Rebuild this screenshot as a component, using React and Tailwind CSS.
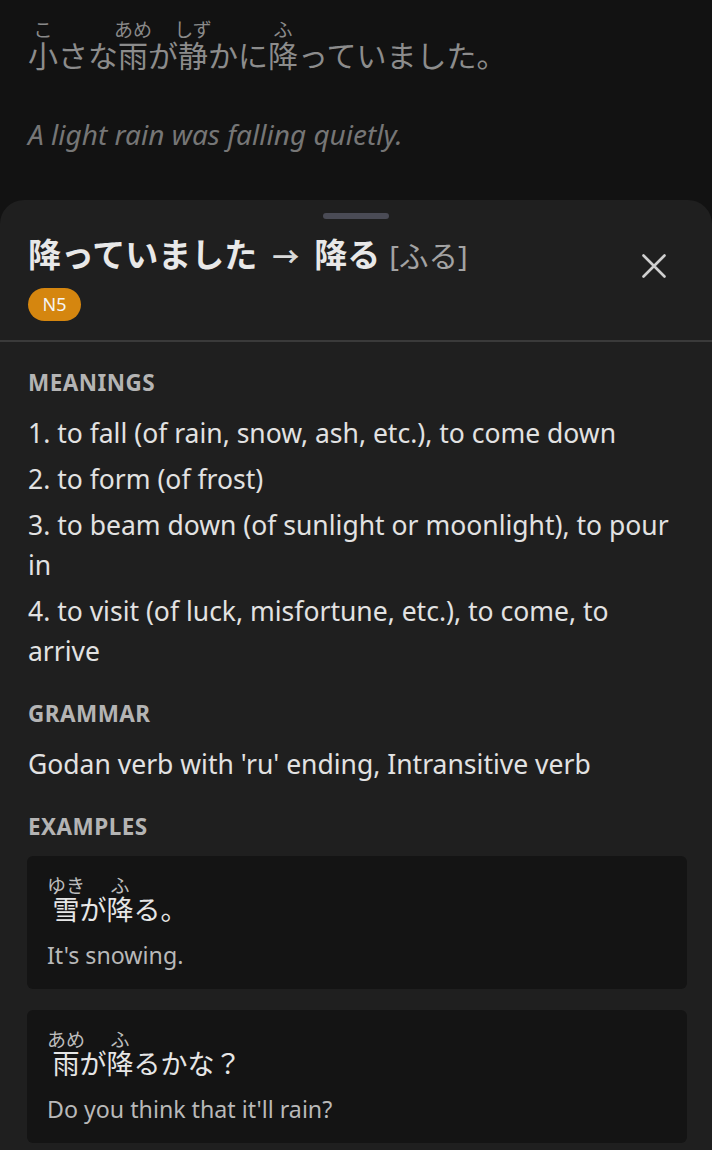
import React from "react";

const FONT = { fontFamily: '"Noto Sans", "Noto Sans CJK JP", sans-serif' };

function R({ b, r, rtClass }) {
  return (
    <ruby>
      {b}
      <rt className={rtClass}>{r}</rt>
    </ruby>
  );
}

function CloseIcon() {
  return (
    <svg width="24" height="24" viewBox="0 0 24 24" fill="none" stroke="#cfcfcf" strokeWidth="2.6" strokeLinecap="round">
      <path d="M1.5 1.5 L22.5 22.5 M22.5 1.5 L1.5 22.5" />
    </svg>
  );
}

const meanings = [
  "1. to fall (of rain, snow, ash, etc.), to come down",
  "2. to form (of frost)",
  "3. to beam down (of sunlight or moonlight), to pour in",
  "4. to visit (of luck, misfortune, etc.), to come, to arrive",
];

function Heading({ children }) {
  return (
    <div className="text-[22.5px] leading-[28px] font-bold tracking-[0.02em] text-[#b4b4b4]">
      {children}
    </div>
  );
}

function ExampleCard({ children, en }) {
  const rt = "text-[19px] text-[#bdbdbd]";
  return (
    <div className="rounded-[6px] bg-[#141414] pl-[20px] pr-[20px] pt-[20px] pb-[18px]">
      <div className="text-[27px] leading-[40px] text-[#e6e6e6]">{children(rt)}</div>
      <div className="mt-[9px] text-[23.2px] leading-[32px] text-[#b9b9b9]">{en}</div>
    </div>
  );
}

export default function App() {
  const topRt = "text-[19px] text-[#8a8a8a]";
  return (
    <div className="flex min-h-[1150px] w-[712px] flex-col bg-[#121212] overflow-hidden" style={FONT}>
      <div className="h-[200px] shrink-0 px-[28px] pt-[20px]">
        <div className="text-[30px] leading-[44px] text-[#8c8c8c]">
          <R b="小" r="こ" rtClass={topRt} />さな<R b="雨" r="あめ" rtClass={topRt} />が
          <R b="静" r="しず" rtClass={topRt} />かに<R b="降" r="ふ" rtClass={topRt} />っていました。
        </div>
        <div className="mt-[38px] text-[28px] leading-[36px] italic text-[#767676]">
          A light rain was falling quietly.
        </div>
      </div>

      <div className="flex-1 rounded-t-[24px] bg-[#1f1f1f] pb-[40px]">
        <div className="pt-[13px]">
          <div className="mx-auto h-[6px] w-[66px] rounded-full bg-[#4a4b55]" />
        </div>
        <div className="flex items-start justify-between pl-[28px] pr-[46px] pt-[14px]">
          <div>
            <div className="flex items-baseline leading-[44px]">
              <span className="text-[33px] font-bold text-[#e8e8e8]">降っていました</span>
              <span className="mx-[15px] text-[27px] font-bold text-[#d8d8d8]">→</span>
              <span className="text-[33px] font-bold text-[#e8e8e8]">降る</span>
              <span className="ml-[9px] text-[29.5px] text-[#a3a3a3]">[ふる]</span>
            </div>
            <div className="mt-[9px] flex h-[33px] w-[53px] items-center justify-center rounded-full bg-[#d5860f] text-[18px] text-[#f4f4f4]">
              N5
            </div>
          </div>
          <div className="mt-[21px]">
            <CloseIcon />
          </div>
        </div>
        <div className="mt-[19px] h-[2px] bg-[#3a3a3a]" />

        <div className="px-[28px] pt-[27px]">
          <Heading>MEANINGS</Heading>
          <div className="mt-[16px] flex flex-col gap-[6px] text-[26.5px] leading-[40px] text-[#e2e2e2]">
            {meanings.map((m) => (
              <div key={m}>{m}</div>
            ))}
          </div>

          <div className="mt-[29px]">
            <Heading>GRAMMAR</Heading>
          </div>
          <div className="mt-[16px] text-[26.5px] leading-[40px] text-[#e2e2e2]">
            Godan verb with 'ru' ending, Intransitive verb
          </div>

          <div className="mt-[29px]">
            <Heading>EXAMPLES</Heading>
          </div>
          <div className="-ml-[1px] -mr-[3px] mt-[15px] flex flex-col gap-[21px]">
            <ExampleCard en="It's snowing.">
              {(rt) => (
                <>
                  <R b="雪" r="ゆき" rtClass={rt} />が<R b="降" r="ふ" rtClass={rt} />る。
                </>
              )}
            </ExampleCard>
            <ExampleCard en="Do you think that it'll rain?">
              {(rt) => (
                <>
                  <R b="雨" r="あめ" rtClass={rt} />が<R b="降" r="ふ" rtClass={rt} />るかな？
                </>
              )}
            </ExampleCard>
          </div>
        </div>
      </div>
    </div>
  );
}
